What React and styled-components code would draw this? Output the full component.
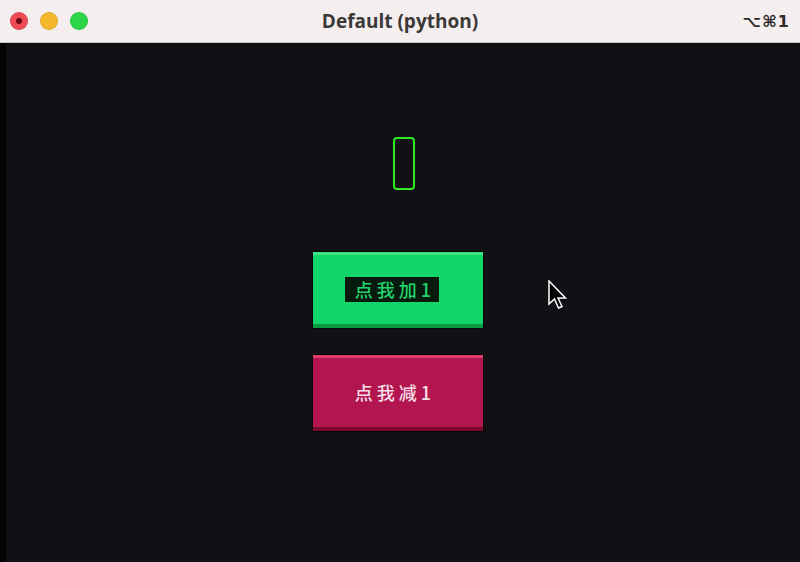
import React from 'react';
import styled, { createGlobalStyle } from 'styled-components';

const Global = createGlobalStyle`
  html, body { margin: 0; padding: 0; background: #111014; }
  body { width: 800px; height: 562px; overflow: hidden; }
`;

const Window = styled.div`
  position: relative;
  display: flex;
  flex-direction: column;
  width: 800px;
  height: 562px;
  background: #111014;
  font-family: "Noto Sans CJK SC", "Noto Sans", sans-serif;
`;

const TitleBar = styled.div`
  position: relative;
  display: flex;
  align-items: center;
  height: 42px;
  padding: 0 10px;
  background: #f4eeee;
  border-bottom: 1px solid #c9c4c4;
  box-sizing: content-box;
`;

const Lights = styled.div`
  display: flex;
  gap: 12px;
`;

const Light = styled.span`
  position: relative;
  width: 18px;
  height: 18px;
  border-radius: 50%;
  background: ${(p) => p.color};
  box-shadow: inset 0 0 0 0.5px rgba(0, 0, 0, 0.15);
`;

const Dot = styled.span`
  position: absolute;
  left: 6px;
  top: 6px;
  width: 6px;
  height: 6px;
  border-radius: 50%;
  background: #6b0c14;
`;

const Title = styled.div`
  position: absolute;
  left: 0;
  right: 0;
  text-align: center;
  font-family: "Open Sans", "Liberation Sans", sans-serif;
  font-weight: 700;
  font-size: 19px;
  color: #3b3838;
  pointer-events: none;
`;

const Shortcut = styled.div`
  margin-left: auto;
  font-family: "DejaVu Sans", "Liberation Sans", sans-serif;
  font-weight: 700;
  font-size: 16px;
  color: #2e2b2b;
  letter-spacing: 1px;
`;

const Body = styled.div`
  position: relative;
  flex: 1;
  display: flex;
  border-left: 6px solid #050505;
  background: #111014;
`;

const Column = styled.div`
  display: flex;
  flex-direction: column;
  align-items: flex-start;
  padding: 94px 0 0 307px;
`;

const Display = styled.div`
  width: 18px;
  height: 49px;
  margin-left: 80px;
  border: 2px solid #33e622;
  border-radius: 4px;
`;

const Button = styled.button`
  display: flex;
  align-items: center;
  justify-content: center;
  width: 170px;
  height: 76px;
  margin-top: ${(p) => p.gap}px;
  padding: 0 12px 0 0;
  border: 0;
  border-top: 3px solid ${(p) => p.top};
  border-bottom: 4px solid ${(p) => p.bottom};
  background: ${(p) => p.bg};
  box-shadow: 0 0 0 1px #070707;
  font-family: "Noto Sans CJK SC", "Noto Sans", sans-serif;
  font-size: 18px;
  font-weight: 500;
  letter-spacing: 4px;
  color: ${(p) => p.fg};
  cursor: pointer;
`;

const Label = styled.span`
  display: inline-block;
  padding: 0 ${(p) => (p.boxed ? 4 : 0)}px 0 ${(p) => (p.boxed ? 10 : 6)}px;
  line-height: 25px;
  background: ${(p) => (p.boxed ? '#071a0e' : 'transparent')};
`;

const Cursor = styled.svg`
  position: absolute;
  left: 541px;
  top: 237px;
`;

export default function App() {
  return (
    <Window>
      <Global />
      <TitleBar>
        <Lights>
          <Light color="#ee4a55"><Dot /></Light>
          <Light color="#f4b72c" />
          <Light color="#2ad546" />
        </Lights>
        <Title>Default (python)</Title>
        <Shortcut>⌥⌘1</Shortcut>
      </TitleBar>
      <Body>
        <Column>
          <Display />
          <Button gap={62} bg="#12d66a" top="#3ce683" bottom="#0a9a44" fg="#20d46b">
            <Label boxed>点我加1</Label>
          </Button>
          <Button gap={27} bg="#b3154e" top="#e23a6c" bottom="#7c0a30" fg="#f6dfe8">
            <Label>点我减1</Label>
          </Button>
        </Column>
        <Cursor width="22" height="30" viewBox="0 0 22 30">
          <path
            d="M2 1 L2 24 L7.5 19 L11.5 28 L15 26.5 L11 18 L18.5 18 Z"
            fill="#000"
            stroke="#fff"
            strokeWidth="1.5"
            strokeLinejoin="miter"
          />
        </Cursor>
      </Body>
    </Window>
  );
}
